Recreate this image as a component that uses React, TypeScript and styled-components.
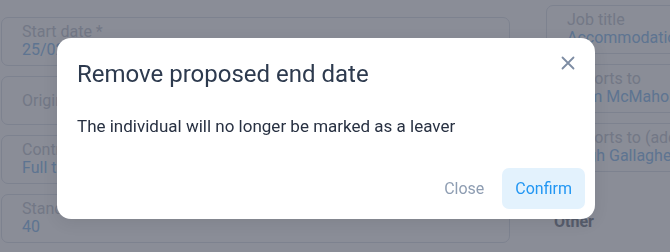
import { createGlobalStyle, styled } from 'styled-components'

const GlobalStyle = createGlobalStyle`
    html, body {
        margin: 0;
        padding: 0;
        background: #ffffff;
        overflow: hidden;
    }
    body {
        font-family: Roboto, "Liberation Sans", Arial, sans-serif;
    }
    * {
        box-sizing: border-box;
    }
`

const StyledPage = styled.div`
    display: flex;
    gap: 36px;
    width: 670px;
    height: 252px;
    padding-left: 1px;
    overflow: hidden;
`

const StyledColumn = styled.div<{ $top: number; $width: number }>`
    display: flex;
    flex-direction: column;
    gap: 10px;
    flex: 0 0 ${p => p.$width}px;
    margin-top: ${p => p.$top}px;
`

const StyledField = styled.div<{ $single?: boolean }>`
    display: flex;
    flex-direction: column;
    justify-content: center;
    height: 49px;
    padding: ${p => (p.$single ? '0 20px' : '5px 20px 6px')};
    border: 1px solid #e4e8ee;
    border-radius: 7px;
    white-space: nowrap;
    overflow: hidden;
`

const StyledFieldLabel = styled.div`
    font-size: 16px;
    line-height: 18px;
    color: #d0d4dc;
`

const StyledFieldValue = styled.div`
    font-size: 16px;
    line-height: 18px;
    color: #a6cdf2;
`

const StyledSectionTitle = styled.div`
    margin-top: 30px;
    padding-left: 8px;
    font-size: 16px;
    line-height: 20px;
    font-weight: 700;
    color: #989ea8;
`

const StyledOverlay = styled.div`
    position: fixed;
    inset: 0;
    background: rgba(22, 28, 48, 0.5);
    display: flex;
    align-items: flex-start;
    padding: 38px 0 0 57px;
`

const StyledModal = styled.div`
    position: relative;
    width: 538px;
    background: #ffffff;
    border-radius: 14px;
    box-shadow: 0 4px 16px rgba(0, 0, 0, 0.08);
`

const StyledModalHeader = styled.div`
    padding: 20px 20px 0;
`

const StyledModalTitle = styled.h2`
    margin: 0;
    font-size: 24px;
    line-height: 32px;
    font-weight: 400;
    color: #2d3a4e;
`

const StyledCloseIcon = styled.button`
    position: absolute;
    top: 13px;
    right: 15px;
    width: 24px;
    height: 24px;
    padding: 0;
    border: none;
    background: none;
    color: #7d8ca3;
    display: flex;
    align-items: center;
    justify-content: center;
    cursor: pointer;
`

const StyledModalBody = styled.p`
    margin: 0;
    padding: 24px 20px 20px;
    font-size: 17px;
    line-height: 24px;
    color: #283142;
`

const StyledModalFooter = styled.div`
    display: flex;
    justify-content: flex-end;
    gap: 5px;
    padding: 10px;
`

const StyledButton = styled.button<{ $primary?: boolean }>`
    height: 41px;
    padding: 0 13px;
    border: none;
    border-radius: 7px;
    font-family: inherit;
    font-size: 16px;
    background: ${p => (p.$primary ? '#e3f2fd' : 'transparent')};
    color: ${p => (p.$primary ? '#2196f3' : '#8e9db2')};
    cursor: pointer;
`

const leftFields = [
    { label: 'Start date *', value: '25/02/2023' },
    { label: 'Original start date' },
    { label: 'Contract type', value: 'Full time' },
    { label: 'Standard hours per week', value: '40' },
]

const rightFields = [
    { label: 'Job title', value: 'Accommodation Officer' },
    { label: 'Reports to', value: 'Liam McMahon' },
    { label: 'Reports to (additional)', value: 'Hugh Gallagher' },
]

export default function App() {
    return (
        <>
            <GlobalStyle />
            <StyledPage>
                <StyledColumn $top={17} $width={509}>
                    {leftFields.map(field => (
                        <StyledField key={field.label} $single={!field.value}>
                            <StyledFieldLabel>{field.label}</StyledFieldLabel>
                            {field.value && <StyledFieldValue>{field.value}</StyledFieldValue>}
                        </StyledField>
                    ))}
                </StyledColumn>
                <StyledColumn $top={5} $width={330}>
                    {rightFields.map(field => (
                        <StyledField key={field.label}>
                            <StyledFieldLabel>{field.label}</StyledFieldLabel>
                            <StyledFieldValue>{field.value}</StyledFieldValue>
                        </StyledField>
                    ))}
                    <StyledSectionTitle>Other</StyledSectionTitle>
                </StyledColumn>
            </StyledPage>

            <StyledOverlay>
                <StyledModal role="dialog">
                    <StyledModalHeader>
                        <StyledModalTitle>Remove proposed end date</StyledModalTitle>
                    </StyledModalHeader>
                    <StyledCloseIcon aria-label="Close">
                        <svg width="24" height="24" viewBox="0 0 24 24" fill="none" stroke="currentColor" strokeWidth="1.8" strokeLinecap="round">
                            <path d="M6.5 6.5l11 11M17.5 6.5l-11 11" />
                        </svg>
                    </StyledCloseIcon>
                    <StyledModalBody>The individual will no longer be marked as a leaver</StyledModalBody>
                    <StyledModalFooter>
                        <StyledButton>Close</StyledButton>
                        <StyledButton $primary>Confirm</StyledButton>
                    </StyledModalFooter>
                </StyledModal>
            </StyledOverlay>
        </>
    )
}
